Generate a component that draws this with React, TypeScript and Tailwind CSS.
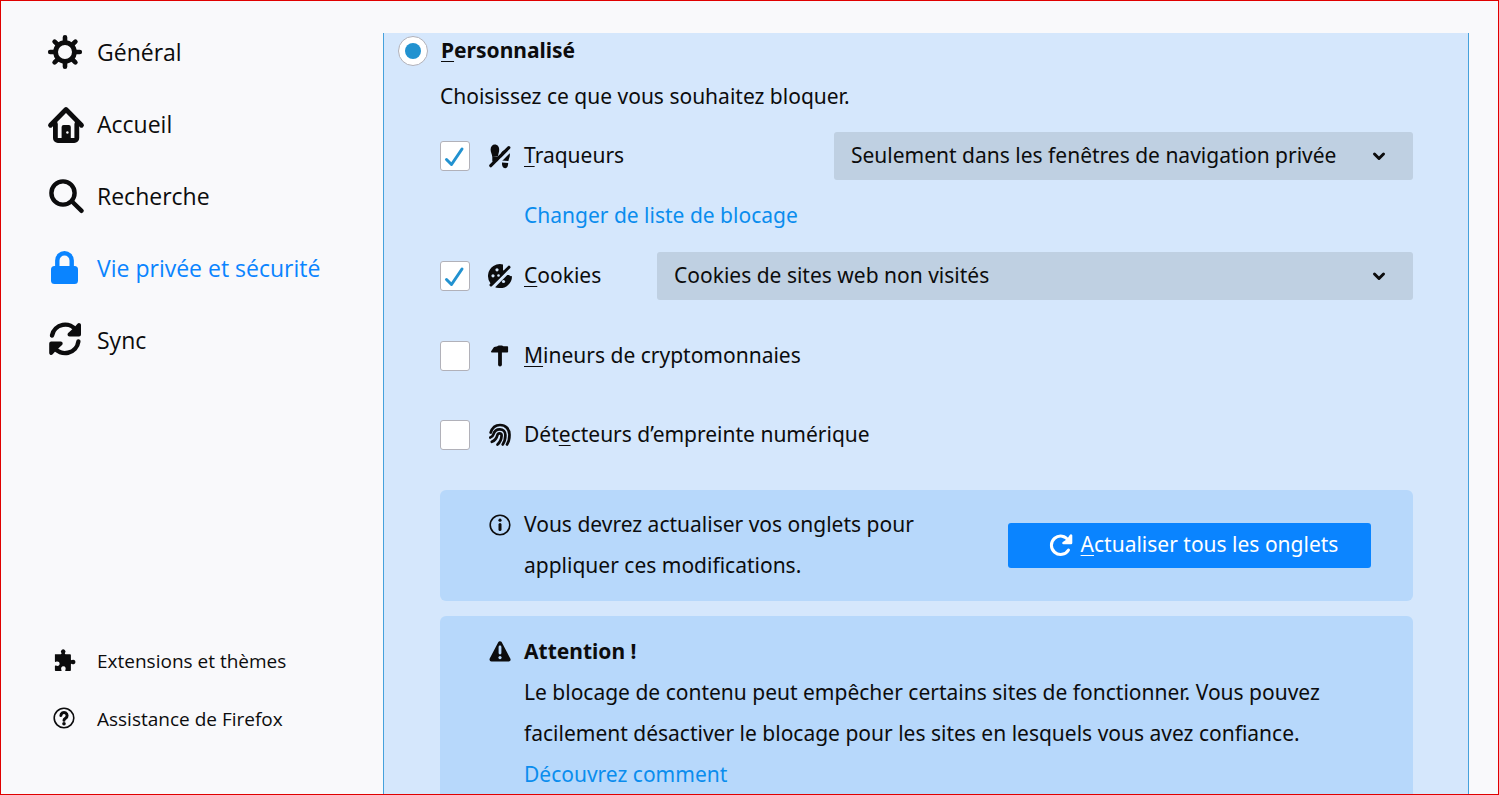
import type { ReactNode } from "react";

function Svg({ size, children }: { size: 24 | 36; children: ReactNode }) {
	return (
		<svg
			viewBox={`0 0 ${size} ${size}`}
			className={size === 36 ? "size-9 shrink-0" : "size-6 shrink-0"}
			fill="none"
			stroke="currentColor"
			strokeLinecap="round"
			strokeLinejoin="round"
			overflow="visible"
			aria-hidden="true"
		>
			{children}
		</svg>
	);
}

function GearIcon() {
	return (
		<Svg size={36}>
			<circle cx="17" cy="18" r="9.4" strokeWidth="4.8" />
			<path
				d="M17 3.200v4M17 28.800v4M2.200 18h4M27.800 18h4M6.600 7.600l2.600 2.600M24.800 25.800l2.600 2.600M27.400 7.600l-2.600 2.600M9.200 25.800l-2.600 2.600"
				strokeWidth="4.600"
			/>
		</Svg>
	);
}

function HomeIcon() {
	return (
		<Svg size={36}>
			<path d="M2.500 19.200L18 3.500l15.500 15.700" strokeWidth="4.800" />
			<path d="M7.400 18v14a2.500 2.500 0 0 0 2.500 2.500h16.400a2.500 2.500 0 0 0 2.500-2.500V18" strokeWidth="4.800" />
			<path
				d="M13.600 34V21a2 2 0 0 1 2-2h5.200a2 2 0 0 1 2 2v13z"
				fill="currentColor"
				stroke="none"
			/>
			<circle cx="19.400" cy="26.500" r="1.200" fill="#f9f9fb" stroke="none" />
		</Svg>
	);
}

function SearchIcon() {
	return (
		<Svg size={36}>
			<circle cx="15" cy="15" r="11.600" strokeWidth="4.400" />
			<path d="M24 23.500l9.600 9.300" strokeWidth="4.400" />
		</Svg>
	);
}

function LockIcon() {
	return (
		<Svg size={36}>
			<rect x="3" y="16" width="27" height="18" rx="3.500" fill="currentColor" stroke="none" />
			<path d="M9.300 18v-7.500a7.200 7.200 0 0 1 14.400 0V18" strokeWidth="4.400" />
		</Svg>
	);
}

function SyncIcon() {
	return (
		<Svg size={36}>
			<path d="M4 13.500A13.400 13.400 0 0 1 28.500 9" strokeWidth="4.400" />
			<path d="M31 3v9.500H21.500l5.500-5z" fill="currentColor" strokeWidth="4" />
			<path d="M30.400 19.500A13.400 13.400 0 0 1 5.900 25" strokeWidth="4.400" />
			<path d="M3.200 31v-9.500h9.500l-5.500 5z" fill="currentColor" strokeWidth="4" />
		</Svg>
	);
}

function PuzzleIcon() {
	return (
		<Svg size={24}>
			<path
				d="M3 5.200h5.800c.7 0 .9-.6.6-1.100a2.300 2.300 0 1 1 3.600 0c-.3.500-.1 1.100.6 1.100h4.200c.7 0 1.100.5 1.100 1.100v4.100c0 .7.6.9 1.100.6a2.300 2.300 0 1 1 0 4c-.5-.3-1.100-.1-1.100.6v5.300c0 .6-.5 1.100-1.100 1.100h-3.900c-.7 0-.9-.5-.5-1.100.8-1.500.1-3.600-2-3.600s-2.800 2.100-2 3.600c.4.6.2 1.100-.5 1.100H4c-.6 0-1.100-.5-1.100-1.100v-3.800c0-.7.5-.9 1.100-.5 1.600.8 3.600.1 3.600-1.900s-2-2.700-3.600-1.900c-.6.4-1.100.2-1.100-.5V5.400z"
				fill="currentColor"
				stroke="none"
			/>
		</Svg>
	);
}

function HelpIcon() {
	return (
		<Svg size={24}>
			<circle cx="12" cy="11" r="9.800" strokeWidth="1.600" />
			<path d="M8.900 8.500a3.100 3.100 0 1 1 4.700 2.700c-1.100.7-1.600 1-1.600 2" strokeWidth="3" />
			<circle cx="12" cy="16.800" r="1.800" fill="currentColor" stroke="none" />
		</Svg>
	);
}

function TrackerIcon() {
	return (
		<Svg size={24}>
			<g fill="currentColor" stroke="none">
				<path d="M6.800.5c2.700 0 4.400 2.200 4.400 5 0 2.800-1 4.400-1.200 6.900L4.300 13C4.100 10.300 2.600 8.500 2.600 5.500 2.600 2.600 4.400.5 6.800.5z" />
				<path d="M4.300 13h6v4.500H4.300z" />
				<path d="M17.700 6c2.600 0 4.200 2.100 4.200 4.700 0 2.300-1.200 4-1.500 6.400l-7-.6c0-2-.6-3.400-.6-5.500 0-2.500 2.300-5 4.900-5z" />
				<path d="M14 18.500l6.200.6c-.1 3.100-.9 5.300-3.100 5.100-2.300-.2-3.400-2.700-3.100-5.700z" />
			</g>
			<path d="M3.500 25.300L24.300 4.500" stroke="#d5e7fc" strokeWidth="3.200" strokeLinecap="butt" />
			<path d="M2.800 21.700L20.800 3.700" strokeWidth="3.200" />
		</Svg>
	);
}

function CookieIcon() {
	return (
		<Svg size={24}>
			<path
				d="M15 .5A12 12 0 1 0 24 12c-1.300.5-2.400 0-2.800-1-1.900.4-3.300-.5-3.500-2.200L15 6z"
				fill="currentColor"
				stroke="none"
			/>
			<path d="M3.500 24.500L24.500 3.500" stroke="#d5e7fc" strokeWidth="3.200" strokeLinecap="butt" />
			<path d="M3 21L21 3.200" strokeWidth="3" />
			<g fill="#d5e7fc" stroke="none">
				<circle cx="9" cy="5.800" r="1.600" />
				<circle cx="5" cy="11.800" r="1.600" />
				<circle cx="10.500" cy="11.500" r="1.300" />
				<circle cx="15.500" cy="17.500" r="1.600" />
			</g>
		</Svg>
	);
}

function MinerIcon() {
	return (
		<Svg size={24}>
			<path
				d="M3.800 7.700L6.500 3.800 9.500 3 11 2.300h3L15 3h4.300v4.700z"
				fill="currentColor"
				strokeWidth="1.600"
			/>
			<path d="M12 5v15.500" strokeWidth="3.800" />
		</Svg>
	);
}

function FingerprintIcon() {
	return (
		<Svg size={24}>
			<g strokeWidth="2.700">
				<path d="M2.700 9.500C4.200 4.700 7.500 2 12 2c5.800 0 9.500 4.200 9.500 9.800 0 4-.7 7-2.500 9.700" />
				<path d="M2.300 14.500c1.700-.5 2.700-1.500 3.200-3.300.8-3 3.300-4.900 6.300-4.900 3.400 0 5.600 2.400 5.600 5.800 0 3.700-.8 6.800-2.700 9.400" />
				<path d="M3.800 18.800c3-1.200 4.800-3.300 5.500-6.400.3-1.300 1.100-2 2.300-2s2 .9 2 2.200c-.2 3.600-1.600 6.700-4.100 8.900" />
			</g>
		</Svg>
	);
}

function InfoIcon() {
	return (
		<Svg size={24}>
			<circle cx="12" cy="12" r="9.800" strokeWidth="1.600" />
			<path d="M12 11.500v5" strokeWidth="3" />
			<circle cx="12" cy="7.200" r="1.600" fill="currentColor" stroke="none" />
		</Svg>
	);
}

function WarningIcon() {
	return (
		<Svg size={24}>
			<path d="M12 4.300L20.500 20.500h-17z" fill="currentColor" strokeWidth="4" />
			<path d="M12 8v6" stroke="#b7d8fb" strokeWidth="2.800" />
			<circle cx="12" cy="18.600" r="1.600" fill="#b7d8fb" stroke="none" />
		</Svg>
	);
}

function ReloadIcon() {
	return (
		<Svg size={24}>
			<path d="M19.500 17A9.200 9.200 0 1 1 19.500 7.500" strokeWidth="3" />
			<path d="M22 2.500V10h-7.500l4.500-3z" fill="currentColor" strokeWidth="2.600" />
		</Svg>
	);
}

// Lettre de raccourci clavier
function Key({ children }: { children: string }) {
	return <u className="decoration-1 underline-offset-3">{children}</u>;
}

function NavItem({ icon, label, active }: { icon: ReactNode; label: string; active?: boolean }) {
	return (
		<a
			href="#"
			aria-current={active ? "page" : undefined}
			className={`flex h-[72px] items-center gap-[13px] text-[23px] ${active ? "text-[#0a84ff]" : ""}`}
		>
			{icon}
			{label}
		</a>
	);
}

function FooterItem({ icon, label }: { icon: ReactNode; label: string }) {
	return (
		<a href="#" className="flex h-[58px] items-center gap-[17px] text-[19px]">
			<span className="flex w-8 justify-center">{icon}</span>
			{label}
		</a>
	);
}

type CheckRowProps = {
	id: string;
	icon: ReactNode;
	label: ReactNode;
	checked?: boolean;
	children?: ReactNode;
};

function CheckRow({ id, icon, label, checked, children }: CheckRowProps) {
	return (
		<div className="flex h-12 items-center">
			<span className="grid shrink-0">
				<input
					id={id}
					type="checkbox"
					defaultChecked={checked}
					className="peer col-start-1 row-start-1 size-[30px] appearance-none rounded-[3px] border border-[#b1b1b9] bg-white"
				/>
				<svg
					viewBox="0 0 30 30"
					className="pointer-events-none invisible col-start-1 row-start-1 size-[30px] peer-checked:visible"
					aria-hidden="true"
				>
					<path
						d="M6.500 18.500l5 5L22 8"
						fill="none"
						stroke="#2292d0"
						strokeWidth="3"
						strokeLinecap="round"
						strokeLinejoin="round"
					/>
				</svg>
			</span>
			<label htmlFor={id} className="ml-[18px] flex items-center gap-3 whitespace-nowrap">
				{icon}
				<span>{label}</span>
			</label>
			{children}
		</div>
	);
}

function Menu({ label, value, className }: { label: string; value: string; className: string }) {
	return (
		<div className={`relative ml-auto ${className}`}>
			<select
				aria-label={label}
				className="h-12 w-full appearance-none rounded-[3px] bg-[#bfd0e2] pr-14 pl-[17px]"
			>
				<option>{value}</option>
			</select>
			<svg
				viewBox="0 0 16 16"
				className="pointer-events-none absolute top-4 right-[26px] size-4"
				aria-hidden="true"
			>
				<path
					d="M3.500 6L8 10.500 12.500 6"
					fill="none"
					stroke="currentColor"
					strokeWidth="3"
					strokeLinecap="round"
					strokeLinejoin="round"
				/>
			</svg>
		</div>
	);
}

export default function App() {
	return (
		<div className="flex h-screen overflow-hidden border border-[#e00000] bg-[#f9f9fb] text-[#0c0c0d]">
			<nav className="flex w-[382px] shrink-0 flex-col justify-between pt-[15px] pb-[46px] pl-[47px] font-['Open_Sans','Noto_Sans',sans-serif]">
				<div>
					<NavItem icon={<GearIcon />} label="Général" />
					<NavItem icon={<HomeIcon />} label="Accueil" />
					<NavItem icon={<SearchIcon />} label="Recherche" />
					<NavItem icon={<LockIcon />} label="Vie privée et sécurité" active />
					<NavItem icon={<SyncIcon />} label="Sync" />
				</div>
				<div>
					<FooterItem icon={<PuzzleIcon />} label="Extensions et thèmes" />
					<FooterItem icon={<HelpIcon />} label="Assistance de Firefox" />
				</div>
			</nav>

			<main className="mt-8 mr-[29px] min-w-0 flex-1 border-x border-[#45a1dc] bg-[#d5e7fc] font-['Noto_Sans',sans-serif] text-[21px]">
				<div className="flex h-9 items-center gap-[13px] pl-[14px]">
					<input
						id="custom"
						type="radio"
						name="protection"
						defaultChecked
						className="grid size-[30px] appearance-none place-items-center rounded-full border border-[#b1b1b9] bg-white after:size-4 after:rounded-full checked:after:bg-[#2292d0]"
					/>
					<label htmlFor="custom" className="font-bold">
						<Key>P</Key>ersonnalisé
					</label>
				</div>

				<div className="pr-[55px] pl-14">
					<p className="mt-[7px] mb-4 leading-10">Choisissez ce que vous souhaitez bloquer.</p>
					<CheckRow id="trackers" icon={<TrackerIcon />} label={<><Key>T</Key>raqueurs</>} checked>
						<Menu
							label="Traqueurs à bloquer"
							value="Seulement dans les fenêtres de navigation privée"
							className="w-[579px]"
						/>
					</CheckRow>
					<div className="flex h-[72px] items-center pl-[84px]">
						<a href="#" className="text-[#0a8dee]">
							Changer de liste de blocage
						</a>
					</div>
					<CheckRow id="cookies" icon={<CookieIcon />} label={<><Key>C</Key>ookies</>} checked>
						<Menu label="Cookies à bloquer" value="Cookies de sites web non visités" className="w-[756px]" />
					</CheckRow>
					<div className="mt-8 mb-[31px] grid gap-[31px]">
						<CheckRow id="miners" icon={<MinerIcon />} label={<><Key>M</Key>ineurs de cryptomonnaies</>} />
						<CheckRow
							id="fingerprints"
							icon={<FingerprintIcon />}
							label={<>Dét<Key>e</Key>cteurs d’empreinte numérique</>}
						/>
					</div>

					<section className="flex items-center justify-between rounded-md bg-[#b7d8fb] pt-[14px] pr-[42px] pb-[15px] pl-12">
						<div className="flex gap-3">
							<span className="mt-[9px]">
								<InfoIcon />
							</span>
							<p className="max-w-[420px] leading-[41px]">
								Vous devrez actualiser vos onglets pour appliquer ces modifications.
							</p>
						</div>
						<button
							type="button"
							className="flex h-[45px] w-[363px] items-center justify-center gap-2 rounded-[3px] bg-[#0a84ff] pl-2 whitespace-nowrap text-white"
						>
							<ReloadIcon />
							<span>
								<Key>A</Key>ctualiser tous les onglets
							</span>
						</button>
					</section>

					<section className="mt-[15px] flex gap-3 rounded-md bg-[#b7d8fb] pt-[15px] pr-[70px] pb-4 pl-12">
						<span className="mt-2">
							<WarningIcon />
						</span>
						<div className="leading-[41px]">
							<h2 className="font-bold">Attention !</h2>
							<p>
								Le blocage de contenu peut empêcher certains sites de fonctionner. Vous pouvez facilement
								désactiver le blocage pour les sites en lesquels vous avez confiance.
							</p>
							<a href="#" className="text-[#0a8dee]">
								Découvrez comment
							</a>
						</div>
					</section>
				</div>
			</main>
		</div>
	);
}
